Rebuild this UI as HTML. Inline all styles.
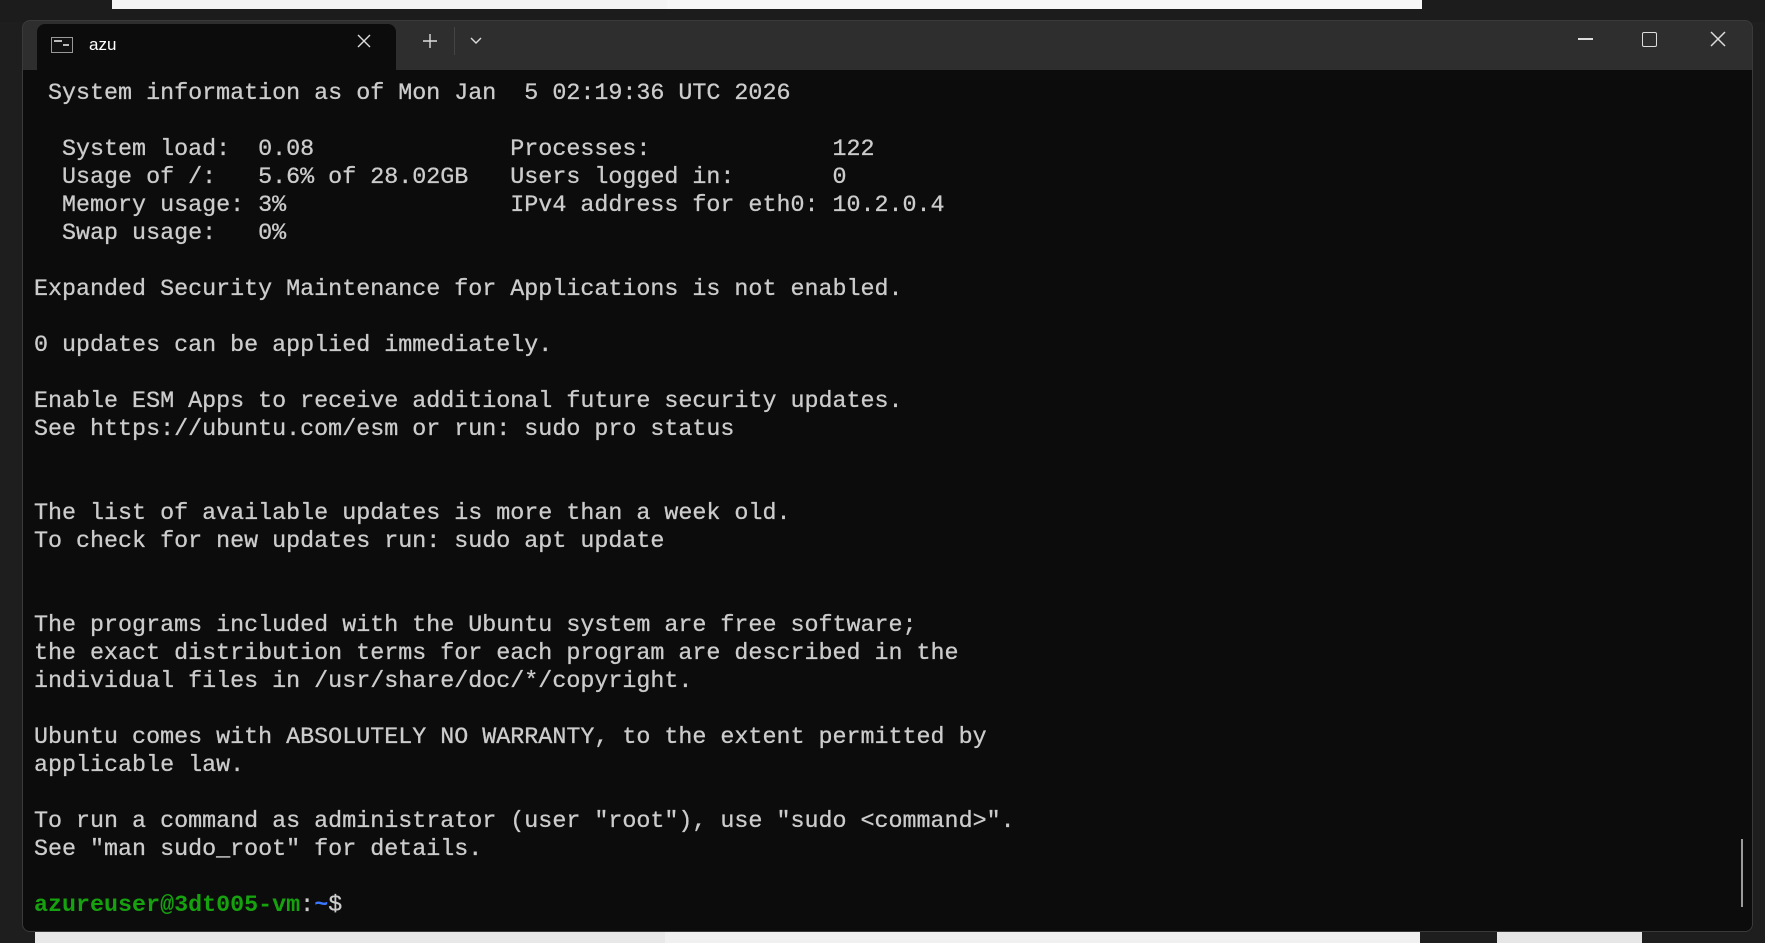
<!DOCTYPE html>
<html><head><meta charset="utf-8"><style>
html,body{margin:0;padding:0;width:1765px;height:943px;overflow:hidden;background:#1e1e1e;font-family:"Liberation Sans",sans-serif}
.abs{position:absolute}
#win{left:22px;top:20px;width:1731px;height:912px;background:#2e2e2e;border-radius:8px;overflow:hidden;border:1px solid #3a3a3a;box-sizing:border-box}
#term{left:0;top:49px;right:0;bottom:0;background:#0c0c0c}
pre{margin:0;position:absolute;left:11px;top:10px;font-family:"Liberation Mono",monospace;font-size:23.35px;line-height:28px;color:#cccccc;-webkit-text-stroke:0.3px #cccccc}
.g{color:#16a10e;font-weight:bold;-webkit-text-stroke:0}.b{color:#3b78ff;font-weight:bold;-webkit-text-stroke:0}
</style></head><body>
<div class="abs" style="left:0;top:0;width:1765px;height:22px;background:#1c1c1c"></div>
<div class="abs" style="left:112px;top:0;width:555px;height:9px;background:#f3f3f3"></div>
<div class="abs" style="left:667px;top:0;width:755px;height:9px;background:#f6f6f6"></div>
<div class="abs" style="left:35px;top:932px;width:630px;height:11px;background:#e8e8e8"></div>
<div class="abs" style="left:665px;top:932px;width:755px;height:11px;background:#f0f0f0"></div>
<div class="abs" style="left:1497px;top:932px;width:145px;height:11px;background:#e6e6e6"></div>
<div id="win" class="abs">
  <div class="abs" style="left:14px;top:3px;width:359px;height:47px;background:#0c0c0c;border-radius:8px 8px 0 0"></div>
  <div class="abs" style="left:28px;top:16px;width:22px;height:16px;background:#111;border:1px solid #999;box-sizing:border-box"></div>
  <div class="abs" style="left:31px;top:19px;width:8px;height:2px;background:#bbb"></div>
  <div class="abs" style="left:40px;top:23px;width:6px;height:1.5px;background:#bbb"></div>
  <div class="abs" style="left:66px;top:14px;color:#fff;font-size:17px">azu</div>
  <svg class="abs" style="left:332px;top:11px" width="18" height="18"><path d="M3 3L15 15M15 3L3 15" stroke="#ddd" stroke-width="1.4"/></svg>
  <svg class="abs" style="left:398px;top:11px" width="18" height="18"><path d="M9 2V16M2 9H16" stroke="#ddd" stroke-width="1.4"/></svg>
  <div class="abs" style="left:431px;top:6px;width:1px;height:28px;background:#444"></div>
  <svg class="abs" style="left:446px;top:14px" width="14" height="12"><path d="M2 3L7 8L12 3" stroke="#ddd" stroke-width="1.4" fill="none"/></svg>
  <div class="abs" style="left:1555px;top:17px;width:15px;height:1.5px;background:#ddd"></div>
  <div class="abs" style="left:1619px;top:11px;width:13px;height:13px;border:1.5px solid #ddd;border-radius:2px"></div>
  <svg class="abs" style="left:1686px;top:9px" width="18" height="18"><path d="M2 2L16 16M16 2L2 16" stroke="#ddd" stroke-width="1.5"/></svg>
  <div id="term" class="abs">
<pre> System information as of Mon Jan  5 02:19:36 UTC 2026

  System load:  0.08              Processes:             122
  Usage of /:   5.6% of 28.02GB   Users logged in:       0
  Memory usage: 3%                IPv4 address for eth0: 10.2.0.4
  Swap usage:   0%

Expanded Security Maintenance for Applications is not enabled.

0 updates can be applied immediately.

Enable ESM Apps to receive additional future security updates.
See https://ubuntu.com/esm or run: sudo pro status


The list of available updates is more than a week old.
To check for new updates run: sudo apt update


The programs included with the Ubuntu system are free software;
the exact distribution terms for each program are described in the
individual files in /usr/share/doc/*/copyright.

Ubuntu comes with ABSOLUTELY NO WARRANTY, to the extent permitted by
applicable law.

To run a command as administrator (user "root"), use "sudo &lt;command&gt;".
See "man sudo_root" for details.

<span class="g">azureuser@3dt005-vm</span>:<span class="b">~</span>$</pre>
    <div class="abs" style="left:1718px;top:769px;width:2px;height:68px;background:#9a9a9a"></div>
  </div>
</div>
</body></html>
